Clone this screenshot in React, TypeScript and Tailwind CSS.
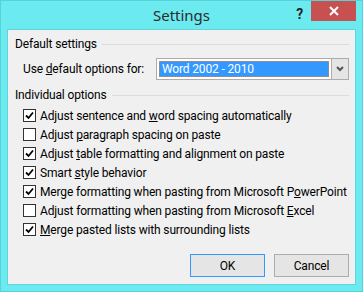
import React from "react";

const font = { fontFamily: 'Roboto, "Noto Sans", sans-serif' };

const Check = ({ on }: { on: boolean }) => (
  <span className="flex h-[13px] w-[13px] shrink-0 items-center justify-center border border-[#333333] bg-white">
    {on && (
      <svg width="9" height="9" viewBox="0 0 9 9" aria-hidden="true">
        <path d="M1 4.5 L3.5 7 L8 1.5" fill="none" stroke="#000" strokeWidth="1.8" />
      </svg>
    )}
  </span>
);

const options: { on: boolean; label: React.ReactNode }[] = [
  { on: true, label: <>Adjust sentence and <u>w</u>ord spacing automatically</> },
  { on: false, label: <>Adjust <u>p</u>aragraph spacing on paste</> },
  { on: true, label: <>Adjust <u>t</u>able formatting and alignment on paste</> },
  { on: true, label: <>Smart <u>s</u>tyle behavior</> },
  { on: true, label: <>Merge formatting when pasting from Microsoft P<u>o</u>werPoint</> },
  { on: false, label: <>Adjust formatting when pasting from Microsoft <u>E</u>xcel</> },
  { on: true, label: <><u>M</u>erge pasted lists with surrounding lists</> },
];

function GroupHeader({ title }: { title: string }) {
  return (
    <div className="flex h-4 items-center pl-[7px] pr-[6px]">
      <span className="leading-4">{title}</span>
      <span className="ml-[5px] h-px flex-1 bg-[#dcdcdc]" />
    </div>
  );
}

export default function App() {
  return (
    <div
      style={font}
      className="flex h-[292px] w-[363px] flex-col border border-[#55d2da] bg-[#6beaf0] text-[12px] tracking-[-0.15px] text-black"
    >
      {/* Title bar */}
      <div className="relative flex h-[28px] shrink-0 items-center justify-center">
        <span className="text-[15px] tracking-normal text-[#2b2b2b]" style={{ fontFamily: '"Noto Sans", sans-serif' }}>
          Settings
        </span>
        <span className="absolute right-[59px] top-[3px] text-[14px] font-bold text-[#222]">?</span>
        <button className="absolute right-[6px] top-0 flex h-[20px] w-[45px] items-center justify-center bg-[#c75050]">
          <svg width="10" height="10" viewBox="0 0 10 10" aria-hidden="true">
            <path d="M1 1 L9 9 M9 1 L1 9" stroke="#fff" strokeWidth="2" />
          </svg>
        </button>
      </div>

      {/* Client */}
      <div className="mx-[6px] mb-[6px] flex flex-1 flex-col border border-[#5fd4db] bg-[#f0f0f0] pt-[6px]">
        <GroupHeader title="Default settings" />
        <div className="mt-[6px] flex h-[22px] items-center pl-[15px] pr-[6px]">
          <span className="w-[133px]">
            Use <u>d</u>efault options for:
          </span>
          <div className="flex h-[22px] flex-1 border border-[#acacac] bg-white">
            <div className="m-[2px] flex flex-1 items-center border border-dotted border-[#f08020] bg-[#3399ff] pl-[2px] text-white">
              Word 2002 - 2010
            </div>
            <div className="flex w-[17px] items-center justify-center border-l border-[#acacac] bg-[#e5e5e5]">
              <svg width="8" height="6" viewBox="0 0 8 6" aria-hidden="true">
                <path d="M1 1 L4 4 L7 1" fill="none" stroke="#555" strokeWidth="2" />
              </svg>
            </div>
          </div>
        </div>

        <div className="mt-[7px]">
          <GroupHeader title="Individual options" />
        </div>
        <div className="mt-[3px] flex flex-col pl-[15px]">
          {options.map((o, i) => (
            <div key={i} className="flex h-[19px] items-center gap-[4px]">
              <Check on={o.on} />
              <span className="whitespace-nowrap">{o.label}</span>
            </div>
          ))}
        </div>

        <div className="mt-[15px] flex justify-end gap-[9px] pr-[6px]">
          <button className="h-[23px] w-[75px] border border-[#3399ff] bg-[#e5e5e5]">OK</button>
          <button className="h-[23px] w-[75px] border border-[#acacac] bg-[#e5e5e5]">Cancel</button>
        </div>
      </div>
    </div>
  );
}
